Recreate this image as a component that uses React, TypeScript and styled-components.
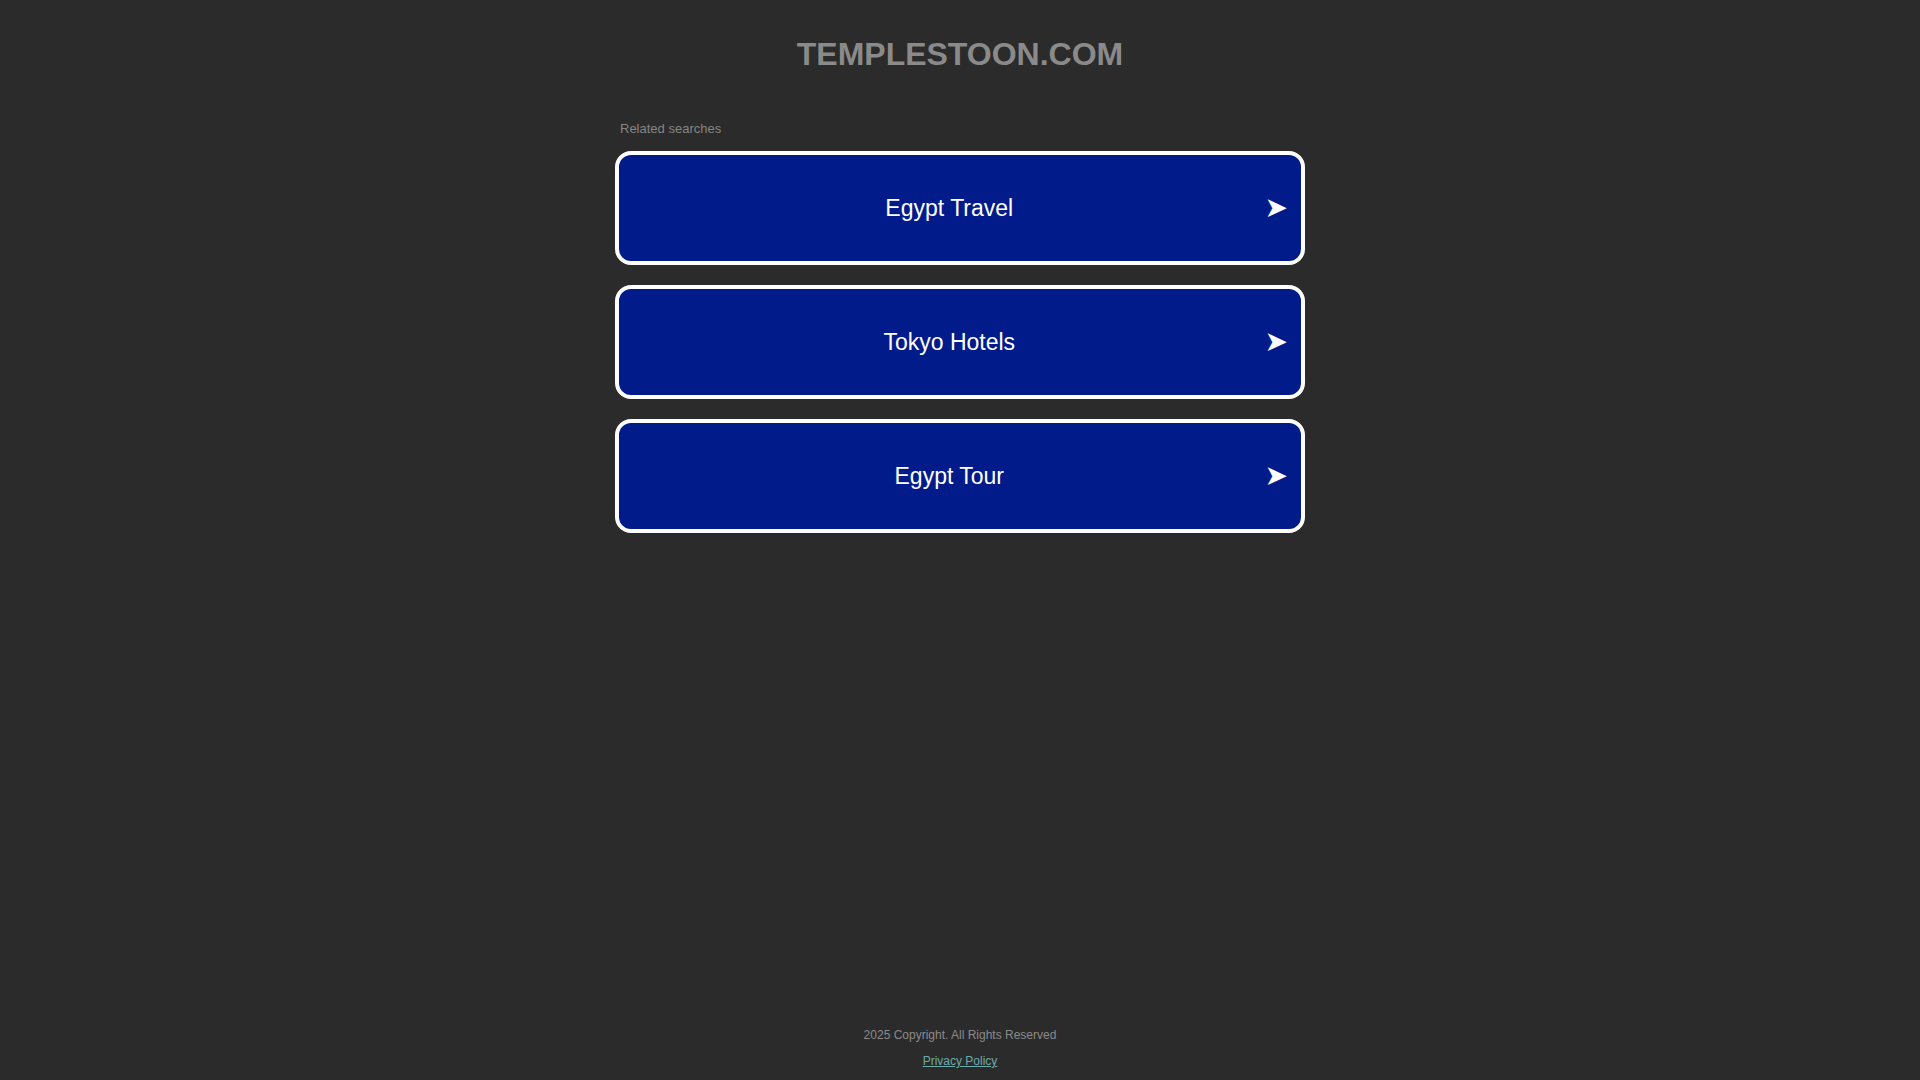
import React from "react";
import styled, { createGlobalStyle } from "styled-components";

const GlobalStyle = createGlobalStyle`
  html, body {
    margin: 0;
    padding: 0;
    background: #2b2b2b;
  }
  body {
    font-family: "Liberation Sans", Arial, sans-serif;
  }
`;

const Page = styled.div`
  min-height: 100vh;
  display: flex;
  flex-direction: column;
  align-items: center;
  box-sizing: border-box;
`;

const Title = styled.h1`
  margin: 36px 0 0;
  font-size: 32px;
  line-height: 36px;
  font-weight: 700;
  color: #8a8a8a;
  letter-spacing: 0;
`;

const Section = styled.section`
  width: 690px;
  margin-top: 49px;
  display: flex;
  flex-direction: column;
`;

const Label = styled.div`
  font-size: 13px;
  line-height: 16px;
  color: #858585;
  padding-left: 5px;
  margin-bottom: 14px;
`;

const List = styled.div`
  display: flex;
  flex-direction: column;
  gap: 20px;
`;

const Card = styled.a`
  display: flex;
  align-items: center;
  height: 114px;
  box-sizing: border-box;
  border: 4px solid #ffffff;
  border-radius: 16px;
  background: #021b8b;
  padding: 0 13px 0 15px;
  text-decoration: none;
  color: #ffffff;
  cursor: pointer;
`;

const CardText = styled.span`
  flex: 1;
  text-align: center;
  font-size: 23px;
  line-height: 28px;
  color: #ffffff;
`;

const Arrow = styled.span`
  font-size: 28px;
  line-height: 28px;
  color: #ffffff;
  font-family: "DejaVu Sans", sans-serif;
`;

const Footer = styled.footer`
  margin-top: auto;
  padding-bottom: 11px;
  display: flex;
  flex-direction: column;
  align-items: center;
  gap: 10px;
`;

const Copy = styled.div`
  font-size: 12px;
  line-height: 16px;
  color: #8a8a8a;
`;

const PolicyLink = styled.a`
  font-size: 12px;
  line-height: 16px;
  color: #6aabab;
  text-decoration: underline;
`;

const items = ["Egypt Travel", "Tokyo Hotels", "Egypt Tour"];

export default function App() {
  return (
    <>
      <GlobalStyle />
      <Page>
        <Title>TEMPLESTOON.COM</Title>
        <Section>
          <Label>Related searches</Label>
          <List>
            {items.map((t) => (
              <Card key={t} href="#">
                <CardText>{t}</CardText>
                <Arrow>➤</Arrow>
              </Card>
            ))}
          </List>
        </Section>
        <Footer>
          <Copy>2025 Copyright. All Rights Reserved</Copy>
          <PolicyLink href="#">Privacy Policy</PolicyLink>
        </Footer>
      </Page>
    </>
  );
}
